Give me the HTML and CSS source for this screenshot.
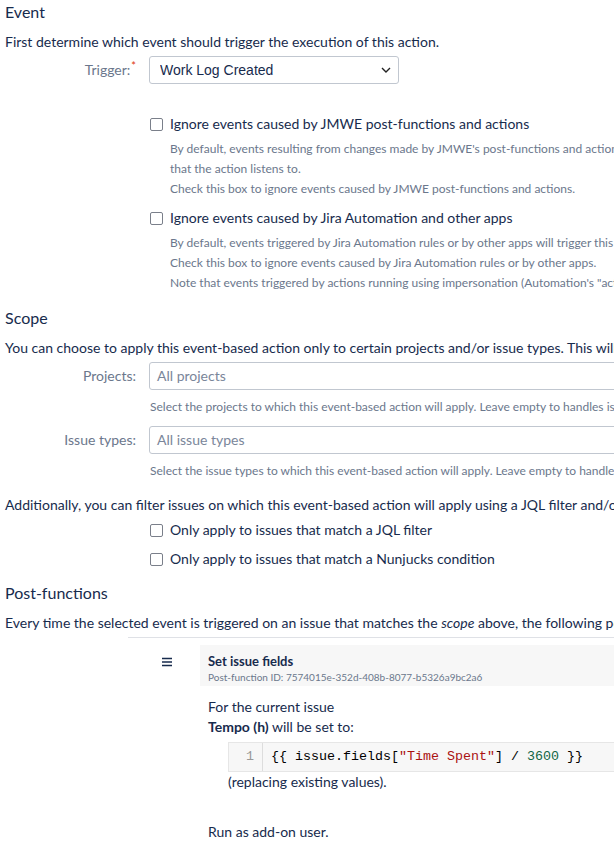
FILE: index.html
```html
<!DOCTYPE html>
<html lang="en">
<head>
    <meta charset="UTF-8">
    <meta name="viewport" content="width=device-width, initial-scale=1.0">
    <title>Event-based action</title>
    <link rel="stylesheet" href="styles.css">
</head>
<body>

<main class="page">
    <!-- Event -->
    <section class="section">
        <h2>Event</h2>
        <p class="intro">First determine which event should trigger the execution of this action.</p>

        <div class="field-row">
            <label class="field-label">Trigger:<span class="required">*</span></label>
            <div class="select-wrap">
                <select class="select">
                    <option>Work Log Created</option>
                </select>
                <svg class="chevron" width="10" height="6" viewBox="0 0 10 6"><path d="M1 1l4 4 4-4" fill="none" stroke="#222" stroke-width="1.4"/></svg>
            </div>
        </div>

        <div class="option option-first">
            <label class="check"><span class="box"></span>Ignore events caused by JMWE post-functions and actions</label>
            <div class="desc">
                By default, events resulting from changes made by JMWE's post-functions and actions will trigger this event-based action if they match the event<br>
                that the action listens to.<br>
                Check this box to ignore events caused by JMWE post-functions and actions.
            </div>
        </div>

        <div class="option">
            <label class="check"><span class="box"></span>Ignore events caused by Jira Automation and other apps</label>
            <div class="desc">
                By default, events triggered by Jira Automation rules or by other apps will trigger this event-based action if they match the event that the action listens to.<br>
                Check this box to ignore events caused by Jira Automation rules or by other apps.<br>
                Note that events triggered by actions running using impersonation (Automation's "actor" feature) will be ignored as well.
            </div>
        </div>
    </section>

    <!-- Scope -->
    <section class="section scope">
        <h2>Scope</h2>
        <p class="intro">You can choose to apply this event-based action only to certain projects and/or issue types. This will limit the issues on which the action runs.</p>

        <div class="field-row">
            <label class="field-label">Projects:</label>
            <div class="input">All projects</div>
        </div>
        <div class="help">Select the projects to which this event-based action will apply. Leave empty to handles issues of all projects.</div>

        <div class="field-row field-second">
            <label class="field-label">Issue types:</label>
            <div class="input">All issue types</div>
        </div>
        <div class="help">Select the issue types to which this event-based action will apply. Leave empty to handle issues of all issue types.</div>

        <p class="intro additional">Additionally, you can filter issues on which this event-based action will apply using a JQL filter and/or a Nunjucks condition.</p>
        <div class="filters">
            <label class="check"><span class="box"></span>Only apply to issues that match a JQL filter</label>
            <label class="check"><span class="box"></span>Only apply to issues that match a Nunjucks condition</label>
        </div>
    </section>

    <!-- Post-functions -->
    <section class="section post">
        <h2>Post-functions</h2>
        <p class="intro">Every time the selected event is triggered on an issue that matches the <em>scope</em> above, the following post-functions will be executed.</p>

        <div class="pf-list">
            <div class="pf-item">
                <div class="handle">
                    <svg width="12" height="10" viewBox="0 0 12 10"><path d="M1 1.5h10M1 5h10M1 8.5h10" stroke="#172b4d" stroke-width="1.3"/></svg>
                </div>
                <div class="pf-body">
                    <div class="pf-head">
                        <div class="pf-title">Set issue fields</div>
                        <div class="pf-id">Post-function ID: 7574015e-352d-408b-8077-b5326a9bc2a6</div>
                    </div>
                    <div class="pf-desc">
                        <div>For the current issue</div>
                        <div><strong>Tempo (h)</strong> will be set to:</div>
                        <div class="code">
                            <div class="gutter">1</div>
                            <div class="code-line">{{ issue.fields[<span class="str">"Time Spent"</span>] / <span class="num">3600</span> }}</div>
                        </div>
                        <div class="note">(replacing existing values).</div>
                        <div class="run-as">Run as add-on user.</div>
                    </div>
                </div>
            </div>
        </div>
    </section>
</main>

</body>
</html>
```
FILE: styles.css
```css
/* Base */
html, body {
    overflow: hidden;
}

body {
    margin: 0;
    font-family: Lato, "Liberation Sans", sans-serif;
    font-size: 14px;
    line-height: 20px;
    color: #172b4d;
    background: white;
}

.page {
    width: 1100px;
    padding: 0 5px;
}

h2 {
    margin: 0;
    font-size: 16px;
    font-weight: normal;
    line-height: 24px;
}

.intro {
    margin: 8px 0 4px;
    white-space: nowrap;
}

/* Form rows */
.field-row {
    display: flex;
    align-items: center;
    gap: 13px;
}

.field-label {
    width: 131px;
    text-align: right;
    color: #6b778c;
    flex-shrink: 0;
}

.required {
    position: relative;
    top: -5px;
    margin-left: 1px;
    color: #de350b;
    font-size: 11px;
}

.select-wrap {
    position: relative;
}

.select {
    appearance: none;
    width: 250px;
    height: 28px;
    padding: 0 24px 0 10px;
    border: 1px solid #c1c7d0;
    border-radius: 3px;
    background: white;
    font-family: "Liberation Sans", Arial, sans-serif;
    font-size: 14px;
    color: #172b4d;
}

.chevron {
    position: absolute;
    right: 8px;
    top: 11px;
}

.input {
    width: 700px;
    height: 26px;
    line-height: 26px;
    padding: 0 7px;
    border: 1px solid #c1c7d0;
    border-radius: 3px;
    color: #7a869a;
}

.help {
    margin: 7px 0 0 145px;
    font-size: 12px;
    color: #6b778c;
    white-space: nowrap;
}

.field-second {
    margin-top: 9px;
}

/* Checkboxes */
.check {
    display: flex;
    align-items: center;
    gap: 7px;
    margin-left: 145px;
    white-space: nowrap;
}

.box {
    width: 11px;
    height: 11px;
    border: 1px solid #7a7f8a;
    border-radius: 2px;
    background: white;
}

.option {
    margin-top: 9px;
}

.option-first {
    margin-top: 30px;
}

.desc {
    margin: 5px 0 0 165px;
    font-size: 12px;
    color: #6b778c;
    white-space: nowrap;
}

.scope {
    margin-top: 13px;
}

.additional {
    margin-top: 14px;
    margin-bottom: 5px;
}

.filters {
    display: flex;
    flex-direction: column;
    gap: 9px;
}

.post {
    margin-top: 12px;
}

/* Post-function list */
.pf-list {
    margin-left: 123px;
    border-top: 1px solid #dfe1e6;
    padding-top: 7px;
}

.pf-item {
    display: flex;
}

.handle {
    width: 72px;
    padding: 7px 0 0 33px;
    box-sizing: border-box;
}

.pf-head {
    width: 800px;
    padding: 7px 8px 1px;
    background: #f7f7f7;
}

.pf-title {
    font-size: 13px;
    font-weight: bold;
    line-height: 18px;
}

.pf-id {
    font-size: 10px;
    line-height: 15px;
    color: #6b778c;
}

.pf-desc {
    padding: 11px 8px 0;
}

.code {
    display: flex;
    margin: 5px 0 0 20px;
    width: 600px;
    border: 1px solid #e6e6e6;
    background: #f7f7f7;
    font-family: "Liberation Mono", monospace;
    font-size: 13.33px;
    line-height: 28px;
}

.gutter {
    width: 34px;
    padding-right: 8px;
    box-sizing: border-box;
    text-align: right;
    color: #999;
    border-right: 1px solid #ddd;
}

.code-line {
    padding-left: 8px;
    color: #000;
    white-space: pre;
}

.str {
    color: #a11;
}

.num {
    color: #164;
}

.note {
    margin-left: 20px;
}

.run-as {
    margin-top: 30px;
}
```
